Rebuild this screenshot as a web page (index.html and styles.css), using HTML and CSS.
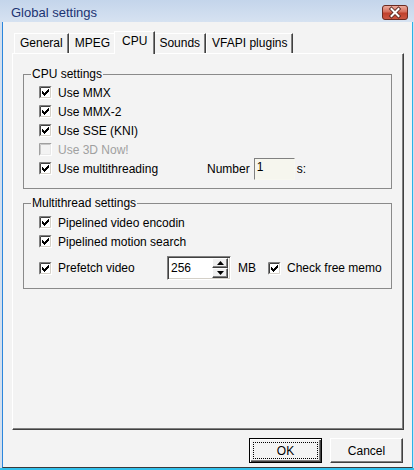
FILE: index.html
```html
<!DOCTYPE html>
<html>
<head>
<meta charset="utf-8">
<link rel="stylesheet" href="styles.css">
</head>
<body>
<svg class="defs" width="0" height="0" aria-hidden="true">
  <defs>
    <symbol id="cb-on" viewBox="0 0 13 13">
      <rect x="0" y="0" width="13" height="13" fill="#fff"/>
      <path d="M0.5 12.5V0.5H12.5" stroke="#808080" fill="none"/>
      <path d="M1.5 11.5V1.5H11.5" stroke="#404040" fill="none"/>
      <path d="M0.5 12.5H12.5V0.5" stroke="#ffffff" fill="none"/>
      <path d="M1.5 11.5H11.5V1.5" stroke="#d4d0c8" fill="none"/>
      <path d="M3 5H4V6H5V7H6V6H7V5H8V4H9V3H10V6H9V7H8V8H7V9H6V10H5V9H4V8H3Z" fill="#000"/>
    </symbol>
    <symbol id="cb-dis" viewBox="0 0 13 13">
      <rect x="0" y="0" width="13" height="13" fill="#f3f3f3"/>
      <path d="M0.5 12.5V0.5H12.5" stroke="#a0a0a0" fill="none"/>
      <path d="M1.5 11.5V1.5H11.5" stroke="#c8c8c8" fill="none"/>
      <path d="M0.5 12.5H12.5V0.5" stroke="#ffffff" fill="none"/>
      <path d="M1.5 11.5H11.5V1.5" stroke="#e8e8e8" fill="none"/>
    </symbol>
  </defs>
</svg>
<div class="window">
  <div class="titlebar">
    <span class="title">Global settings</span>
    <div class="winclose">
      <svg width="24" height="13" viewBox="0 0 24 13">
        <path d="M8.5 3L15.5 10M15.5 3L8.5 10" stroke="#5a2a24" stroke-width="3.8" stroke-linecap="square"/>
        <path d="M8.5 3L15.5 10M15.5 3L8.5 10" stroke="#ffffff" stroke-width="2" stroke-linecap="square"/>
      </svg>
    </div>
  </div>
  <div class="client">
    <div class="tabs">
      <div class="tab">General</div>
      <div class="tab">MPEG</div>
      <div class="tab active">CPU</div>
      <div class="tab">Sounds</div>
      <div class="tab">VFAPI plugins</div>
    </div>
    <div class="panel">
      <fieldset class="group g1">
        <legend>CPU settings</legend>
        <div class="row"><svg class="cb"><use href="#cb-on"/></svg><span>Use MMX</span></div>
        <div class="row"><svg class="cb"><use href="#cb-on"/></svg><span>Use MMX-2</span></div>
        <div class="row"><svg class="cb"><use href="#cb-on"/></svg><span>Use SSE (KNI)</span></div>
        <div class="row disabled"><svg class="cb"><use href="#cb-dis"/></svg><span>Use 3D Now!</span></div>
        <div class="row">
          <div class="check wide"><svg class="cb"><use href="#cb-on"/></svg><span>Use multithreading</span></div>
          <span>Number</span>
          <div class="edit">1</div>
          <span class="suffix">s:</span>
        </div>
      </fieldset>
      <fieldset class="group g2">
        <legend>Multithread settings</legend>
        <div class="row"><svg class="cb"><use href="#cb-on"/></svg><span>Pipelined video encodin</span></div>
        <div class="row"><svg class="cb"><use href="#cb-on"/></svg><span>Pipelined motion search</span></div>
        <div class="row tall">
          <div class="check pre"><svg class="cb"><use href="#cb-on"/></svg><span>Prefetch video</span></div>
          <div class="spin">
            <span class="spin-val">256</span>
            <div class="spin-btns">
              <div class="sbtn"><svg width="7" height="4" viewBox="0 0 7 4"><path d="M3.5 0L7 4H0Z" fill="#000"/></svg></div>
              <div class="sbtn"><svg width="7" height="4" viewBox="0 0 7 4"><path d="M0 0H7L3.5 4Z" fill="#000"/></svg></div>
            </div>
          </div>
          <span class="mb">MB</span>
          <div class="check free"><svg class="cb"><use href="#cb-on"/></svg><span>Check free memo</span></div>
        </div>
      </fieldset>
    </div>
    <div class="buttons">
      <div class="btn default"><span class="focus">OK</span></div>
      <div class="btn">Cancel</div>
    </div>
  </div>
</div>
</body>
</html>
```
FILE: styles.css
```css
* { box-sizing: border-box; }
html, body { margin: 0; padding: 0; }
body {
  background: #ffffff;
  font-family: "Liberation Sans", Arial, sans-serif;
  font-size: 12px;
  color: #000;
}
.defs { position: absolute; width: 0; height: 0; overflow: hidden; }

.window {
  width: 414px;
  height: 470px;
  display: flex;
  flex-direction: column;
  background: #d3dfee;
  border-bottom: 2px solid #31c0ec;
}

.titlebar {
  height: 22px;
  flex: 0 0 22px;
  display: flex;
  align-items: flex-start;
  padding: 0 6px 0 11px;
  background: linear-gradient(#c4d5eb, #d6e2f1);
}
.title {
  flex: 1;
  font-size: 13px;
  line-height: 15px;
  padding-top: 5px;
  color: #1b3372;
}
.winclose {
  margin-top: 5px;
  width: 26px;
  height: 15px;
  border: 1px solid #6b2b22;
  border-radius: 3px;
  background-color: #c8503c;
  background-image: linear-gradient(rgb(236, 170, 156) 0%, rgb(214, 110, 92) 45%, rgb(192, 64, 44) 55%, rgb(204, 86, 66) 100%);
}
.winclose svg { display: block; }

.client {
  flex: 1;
  margin: 0 1px 0 2px;
  border-left: 1px solid #2b86dc;
  border-right: 1px solid #2bb2e8;
  border-bottom: 1px solid #3a3a3a;
  background: #f3f3f3;
  padding: 9px 8px 0 9px;
  display: flex;
  flex-direction: column;
}

.tabs {
  display: flex;
  align-items: flex-end;
  height: 22px;
  padding-left: 2px;
  position: relative;
  z-index: 1;
}
.tab {
  height: 20px;
  line-height: 19px;
  padding: 0 5px;
  border-top: 1px solid #ffffff;
  border-left: 1px solid #ffffff;
  border-right: 1px solid #404040;
  box-shadow: inset -1px 0 #808080;
  background: #f3f3f3;
  white-space: nowrap;
}
.tab.active {
  height: 23px;
  margin: 0 -2px -1px -2px;
  padding: 0 7px;
  line-height: 19px;
  position: relative;
  z-index: 2;
}
.tab.active + .tab { border-left-color: transparent; }

.panel {
  flex: 1;
  border-top: 1px solid #ffffff;
  border-left: 1px solid #ffffff;
  border-right: 1px solid #404040;
  border-bottom: 1px solid #404040;
  box-shadow: inset -1px -1px #808080;
  padding: 13px 11px 0 10px;
  background: #f3f3f3;
}

.group {
  margin: 0;
  border: 1px solid #8a8a8a;
  padding: 2px 0 10px 15px;
  min-width: 0;
}
.group legend {
  padding: 0 1px;
  margin-left: -8px;
  line-height: 14px;
}
.g2 { margin-top: 7px; padding-top: 3px; padding-bottom: 8px; }

.row {
  display: flex;
  align-items: center;
  height: 19px;
  white-space: nowrap;
}
.row.tall { height: 24px; margin-top: 5px; }
.row.disabled { color: #a0a0a0; }

.cb {
  width: 13px;
  height: 13px;
  flex: 0 0 13px;
  margin-right: 6px;
  display: block;
}
.check { display: flex; align-items: center; }
.check.wide { flex: 0 0 168px; }
.check.pre { flex: 0 0 128px; }
.check.free {
  margin-left: 12px;
  width: 114px;
  overflow: hidden;
}

.edit {
  width: 41px;
  height: 22px;
  margin-left: 4px;
  border-top: 1px solid #808080;
  border-left: 1px solid #808080;
  border-right: 1px solid #f8f8f0;
  border-bottom: 1px solid #f8f8f0;
  background: #f6f6ee;
  padding: 1px 0 0 2px;
  line-height: 14px;
}
.suffix { margin-left: 2px; }

.spin {
  width: 64px;
  height: 24px;
  display: flex;
  align-items: center;
  border-top: 1px solid #808080;
  border-left: 1px solid #808080;
  border-right: 1px solid #ffffff;
  border-bottom: 1px solid #ffffff;
  box-shadow: inset 1px 1px #404040, inset -1px -1px #d4d0c8;
  background: #ffffff;
  padding: 2px 2px 2px 3px;
}
.spin-val { flex: 1; }
.spin-btns {
  width: 16px;
  height: 20px;
  display: flex;
  flex-direction: column;
}
.sbtn {
  flex: 1;
  display: flex;
  align-items: center;
  justify-content: center;
  background: #f0f0f0;
  border-top: 1px solid #ffffff;
  border-left: 1px solid #ffffff;
  border-right: 1px solid #404040;
  border-bottom: 1px solid #404040;
  box-shadow: inset -1px -1px #808080;
}
.sbtn svg { display: block; }
.mb { margin-left: 7px; }

.buttons {
  display: flex;
  justify-content: flex-end;
  gap: 8px;
  padding: 8px 1px 4px 0;
}
.btn {
  width: 73px;
  height: 25px;
  display: flex;
  align-items: center;
  justify-content: center;
  border-top: 1px solid #ffffff;
  border-left: 1px solid #ffffff;
  border-right: 1px solid #404040;
  border-bottom: 1px solid #404040;
  box-shadow: inset -1px -1px #808080;
  background: #f3f3f3;
}
.btn.default {
  border: 1px solid #000;
  box-shadow: inset 1px 1px #ffffff, inset -1px -1px #404040, inset -2px -2px #808080;
  padding: 3px;
}
.focus {
  flex: 1;
  align-self: stretch;
  display: flex;
  align-items: center;
  justify-content: center;
  border: 1px dotted #000;
}
```
